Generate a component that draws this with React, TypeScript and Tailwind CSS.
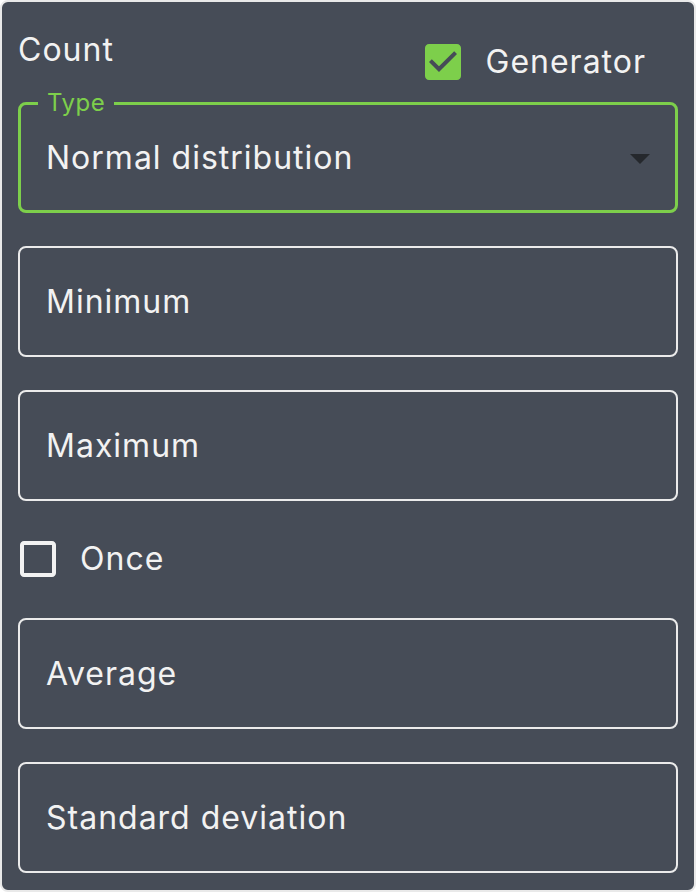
import React from "react";

const font = { fontFamily: "Inter, 'Open Sans', sans-serif" };

function Field({ label }: { label: string }) {
  return (
    <div className="h-[111px] rounded-[8px] border-2 border-[#ebebeb] flex items-center pl-[26px] text-[32px] tracking-[1px] text-[#f2f2f2]">
      {label}
    </div>
  );
}

export default function App() {
  return (
    <div className="w-[696px] h-[892px] bg-white" style={font}>
      <div className="w-full h-full rounded-[8px] border-2 border-[#e9e9e9] bg-[#464c57] px-4 flex flex-col text-[#f2f2f2]">
        <div className="h-[100px] flex justify-between">
          <div className="pt-[24px] text-[32px] tracking-[1px] leading-[48px]">Count</div>
          <div className="mt-[36px] mr-[32px] h-[48px] flex items-center gap-[19px]">
            <svg width="48" height="48" viewBox="0 0 24 24">
              <path
                fill="#7dcf4b"
                d="M19 3H5c-1.11 0-2 .9-2 2v14c0 1.1.89 2 2 2h14c1.11 0 2-.9 2-2V5c0-1.1-.89-2-2-2zm-9 14l-5-5 1.41-1.41L10 14.17l7.59-7.59L19 8l-7 7z"
              />
            </svg>
            <span className="text-[32px] tracking-[1px] leading-[48px]">Generator</span>
          </div>
        </div>

        <div className="relative h-[111px] rounded-[8px] border-[3px] border-[#7dcf4b] flex items-center pl-[25px] pr-[11px] justify-between">
          <span className="absolute left-[17px] top-[-16px] px-[9px] bg-[#464c57] text-[24px] tracking-[0.5px] leading-[28px] text-[#7dcf4b]">
            Type
          </span>
          <span className="text-[32px] tracking-[1px]">Normal distribution</span>
          <svg width="48" height="48" viewBox="0 0 24 24">
            <path fill="#25282d" d="M7 10l5 5 5-5z" />
          </svg>
        </div>

        <div className="mt-[33px] flex flex-col gap-[33px]">
          <Field label="Minimum" />
          <Field label="Maximum" />
        </div>

        <div className="mt-[34px] h-[48px] flex items-center gap-[18px] ml-[-4px]">
          <svg width="48" height="48" viewBox="0 0 24 24">
            <path
              fill="#f2f2f2"
              d="M19 5v14H5V5h14m0-2H5c-1.1 0-2 .9-2 2v14c0 1.1.9 2 2 2h14c1.1 0 2-.9 2-2V5c0-1.1-.9-2-2-2z"
            />
          </svg>
          <span className="text-[32px] tracking-[1px] leading-[48px]">Once</span>
        </div>

        <div className="mt-[35px] flex flex-col gap-[33px]">
          <Field label="Average" />
          <Field label="Standard deviation" />
        </div>
      </div>
    </div>
  );
}
